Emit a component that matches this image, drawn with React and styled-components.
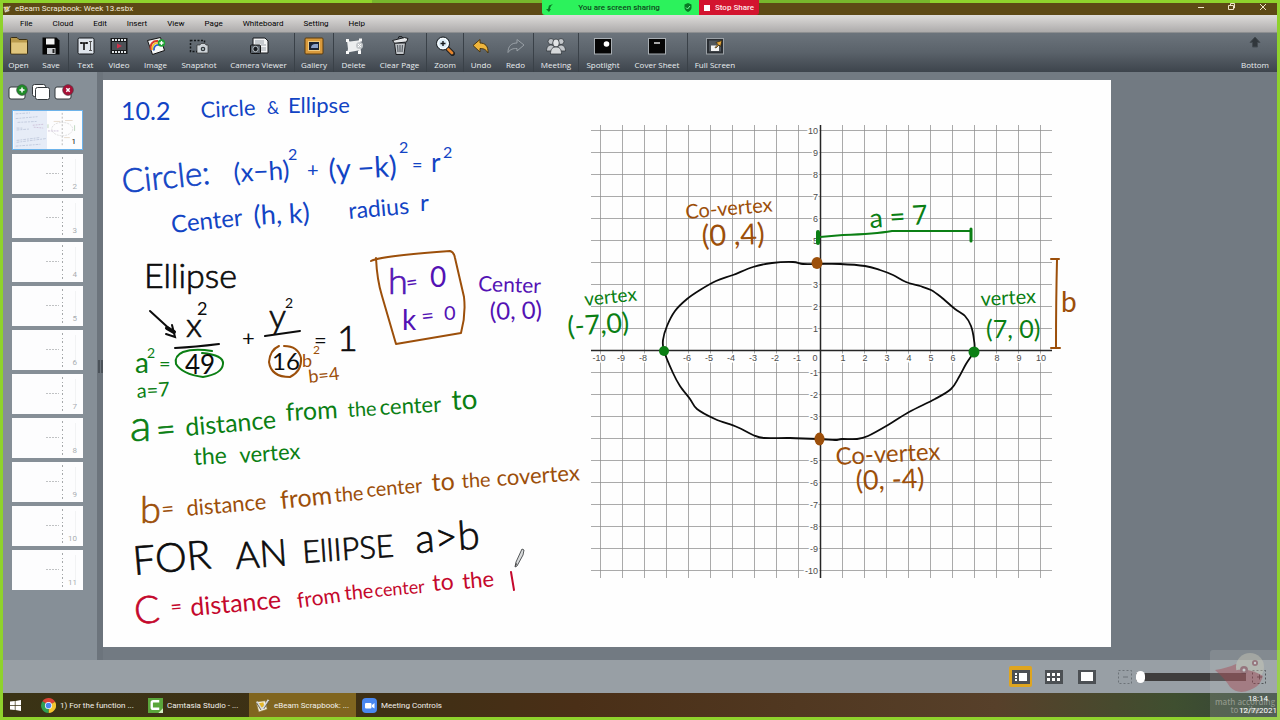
import React from "react";
import styled, { createGlobalStyle } from "styled-components";

const Global = createGlobalStyle`
  * { box-sizing: border-box; }
  body { margin: 0; background: #8fd22c; font-family: Roboto, "Noto Sans", sans-serif; font-size: 8px; }
  button { font: inherit; border: 0; background: none; padding: 0; margin: 0; }
`;

const Frame = styled.div`
  position: relative;
  min-height: 100vh;
  padding: 3px;
  display: flex;
  flex-direction: column;
  background: #8fd22c;
`;

const ShareOverlay = styled.div`
  position: absolute;
  top: 0;
  left: 0;
  right: 0;
  padding-left: 21px;
  display: flex;
  justify-content: center;
  z-index: 2;
`;
const ShareShade = styled.div`
  width: 558px;
  height: 3px;
  background: #77b52c;
  display: flex;
  justify-content: center;
`;
const SharePill = styled.div`
  display: flex;
  flex: none;
  height: 15px;
  width: 217px;
  border-radius: 0 0 3px 3px;
  overflow: hidden;
`;
const ShareStatus = styled.div`
  flex: 1;
  display: flex;
  align-items: center;
  justify-content: space-between;
  padding: 0 7px 0 4px;
  background: #2cf25c;
  color: #0c4a1c;
  font-weight: 500;
`;
const StopShare = styled.button`
  width: 60px;
  color: #ffe9ea;
  display: flex;
  align-items: center;
  justify-content: center;
  gap: 5px;
  && { font-weight: 500; background: #d3142f; }
`;

const TitleBar = styled.header`
  height: 12px;
  display: flex;
  align-items: center;
  gap: 4px;
  background: #5d4915;
  color: #f3ecdc;
`;
const Title = styled.span`
  flex: 1;
  line-height: 10px;
`;
const WindowControls = styled.div`
  display: flex;
  gap: 19px;
  padding-right: 8px;
  button { width: 12px; height: 12px; display: flex; color: #f0e4c8; }
`;

const MenuBar = styled.nav`
  height: 18px;
  display: flex;
  align-items: center;
  gap: 20px;
  padding-left: 17px;
  background: linear-gradient(#dedcda, #adabab);
  border-bottom: 1px solid #8d8f91;
  color: #1c1c1c;
`;

const Toolbar = styled.div`
  height: 39px;
  display: flex;
  justify-content: space-between;
  background: linear-gradient(#6c747c, #5a626a 50%, #3d444c);
  font-family: "Open Sans", "Noto Sans", sans-serif;
`;
const ToolRow = styled.div`
  display: flex;
`;
const Tool = styled.button`
  width: ${(p) => p.$w}px;
  height: 39px;
  display: flex;
  flex-direction: column;
  align-items: center;
  gap: 3px;
  color: #e9edf0;
  line-height: 12px;
  white-space: nowrap;
  && { padding-top: 3px; border-right: ${(p) => (p.$end ? "1px solid #3a4148" : "0")}; }
`;

const Main = styled.main`
  flex: 1;
  display: flex;
  align-items: stretch;
  background: #727a82;
`;
const Sidebar = styled.aside`
  width: 94px;
  flex: none;
  padding: 9px 14px 0 9px;
  background: #868f97;
`;
const PageActions = styled.div`
  display: flex;
  gap: 3px;
  margin-left: -4px;
  height: 29px;
  button { width: 20px; height: 20px; display: flex; }
`;
const Slides = styled.ol`
  list-style: none;
  margin: 0;
  padding: 0;
  display: flex;
  flex-direction: column;
  gap: 4px;
`;
const Slide = styled.button`
  position: relative;
  width: 71px;
  height: 40px;
  color: ${(p) => (p.$active ? "#111" : "#a9adb1")};
  && {
    display: flex;
    border: ${(p) => (p.$active ? "1px solid #6db3ea" : "0")};
    background: #fdfdfe;
  }
  svg { width: 100%; height: 100%; }
  span { position: absolute; right: 6px; bottom: 2px; line-height: 10px; }
`;
const Splitter = styled.div`
  width: 6px;
  flex: none;
  display: flex;
  align-items: center;
  gap: 1px;
  padding-left: 1px;
  background: #6c747c;
  i { width: 2px; height: 13px; background: #4b5259; }
`;
const Workspace = styled.section`
  flex: 1;
  padding: 8px 166px 13px 0;
`;
const Board = styled.svg`
  display: block;
  width: 100%;
  height: auto;
  background: #fefefe;
`;

const StatusBar = styled.footer`
  height: 33px;
  display: flex;
  align-items: center;
  justify-content: flex-end;
  padding-right: 11px;
  background: #989fa5;
`;
const ViewButtons = styled.div`
  display: flex;
  gap: 10px;
  padding-right: 20px;
`;
const ViewButton = styled.button`
  width: 23px;
  height: 21px;
  display: flex;
  align-items: center;
  justify-content: center;
  border-radius: 2px;
  && { background: ${(p) => (p.$active ? "#dfa51f" : "none")}; }
`;
const ZoomButton = styled.button`
  width: 14px;
  height: 14px;
  display: flex;
`;
const ZoomSlider = styled.input`
  appearance: none;
  width: 110px;
  height: 14px;
  margin: 0 6px 0 4px;
  background: none;
  &::-webkit-slider-runnable-track { height: 8px; background: #3f3d3d; }
  &::-webkit-slider-thumb {
    appearance: none;
    width: 9px;
    height: 12px;
    margin-top: -2px;
    border-radius: 5px;
    background: #fff;
  }
`;

const Taskbar = styled.div`
  height: 24px;
  display: flex;
  background: linear-gradient(90deg, #3a3315, #3e2f14 30%, #4a2f17 45%, #57402a 78%, #3f4f30 92%, #34443a);
  color: #f2f0ea;
`;
const Start = styled.button`
  width: 32px;
  display: flex;
  align-items: center;
  && { padding-left: 7px; }
`;
const Task = styled.button`
  width: 107px;
  display: flex;
  align-items: center;
  gap: 4px;
  color: inherit;
  && {
    padding-left: 6px;
    background: ${(p) => (p.$active ? "#80651f" : "none")};
  }
`;
const Clock = styled.div`
  position: relative;
  z-index: 2;
  margin-left: auto;
  width: 38px;
  text-align: center;
  line-height: 12px;
  color: #fff;
`;
const Watermark = styled.div`
  position: absolute;
  right: 0;
  bottom: 0;
  width: 70px;
  height: 70px;
  border-radius: 3px 0 0 0;
  background: rgba(190, 195, 195, 0.22);
  color: rgba(215, 215, 205, 0.45);
  text-align: center;
  font: 600 8px/8px "Open Sans", sans-serif;
  pointer-events: none;
  svg { display: block; margin: 0 0 4px 4px; }
`;

const K = "#16191c";
const toolIcons = {
  Open: (
    <g stroke="#3a2f14" strokeWidth="1">
      <path d="M1.500 2.500q0-1 1-1h5.500l2 2h7.500q1 0 1 1V17q0 1-1 1h-15q-1 0-1-1z" fill="#b99a4c" />
      <path d="M2.500 6.500h15.500v11H2.500z" fill="#e0c67e" stroke="none" />
    </g>
  ),
  Save: (
    <g>
      <path d="M1.500 1.500h14l3 3v14h-17z" fill="#050505" />
      <path d="M5 2.500h8.500v6H5z" fill="#f2f2f2" />
      <path d="M6 12h8.500v6H6z" fill="#c9cccf" />
      <path d="M11.500 13h2v4h-2z" fill="#222" />
    </g>
  ),
  Text: (
    <g>
      <rect x="2" y="2" width="16" height="16" rx="1.5" fill="#dfe5ec" stroke={K} />
      <path d="M5 7h6M8 7v7M5 6v2M11 6v2" stroke="#111" strokeWidth="1.600" />
      <path d="M13 5.500h3M13 14.500h3M14.500 5.500v9" stroke="#555" fill="none" />
    </g>
  ),
  Video: (
    <g>
      <rect x="1.500" y="2" width="17" height="16" fill="#17191b" />
      <path d="M3 4h14M3 16h14" stroke="#dfe3e6" strokeWidth="2" strokeDasharray="2 1" />
      <rect x="3" y="6" width="14" height="8" fill="#4d5257" />
      <path d="M8 7.500l5 2.500-5 2.500z" fill="#d3304a" />
    </g>
  ),
  Image: (
    <g>
      <path d="M1.500 4.500l13-3 4 13-12 4z" fill="#f7f7f7" stroke="#111" />
      <path d="M5 14C3.500 8 7 4.500 12 5" fill="none" stroke="#d83a2e" strokeWidth="2" />
      <path d="M6.500 14C5.500 9.500 8.500 6.500 12.500 7" fill="none" stroke="#f2c32c" strokeWidth="1.800" />
      <path d="M8 14.500C7.500 11 9.500 8.500 13 9" fill="none" stroke="#2e62c8" strokeWidth="1.800" />
      <circle cx="15.500" cy="7" r="3.700" fill="#20a236" />
      <path d="M13.500 7h4M15.500 5v4" stroke="#fff" strokeWidth="1.300" />
    </g>
  ),
  Snapshot: (
    <g>
      <rect x="1.500" y="4.500" width="14" height="11" fill="none" stroke="#15181b" strokeDasharray="2 1.500" strokeWidth="1.500" />
      <path d="M8 9h3l1-1.500h4l1 1.500h2v8H8z" fill="#cdd3d8" stroke="#333" strokeWidth=".7" />
      <circle cx="14" cy="13" r="2.300" fill="#33383d" />
      <circle cx="14" cy="13" r="1" fill="#bcc" />
    </g>
  ),
  "Camera Viewer": (
    <g>
      <path d="M4 2h12l3 3v12H4z" fill="#f4f5f6" stroke={K} />
      <path d="M6 5h9M6 7h9M12 9h5M12 12h5M12 14h5" stroke="#9aa1a8" />
      <rect x="1.500" y="9" width="10" height="8.500" rx="1" fill="#596068" stroke="#111" />
      <circle cx="6.500" cy="13" r="2.700" fill="#1a1d20" stroke="#b9c0c6" />
    </g>
  ),
  Gallery: (
    <g>
      <rect x="1" y="2" width="18" height="16" rx="1" fill="#d99a3c" stroke="#5b3a0d" />
      <rect x="4.500" y="5.500" width="11" height="9" fill="#1a2335" stroke="#f0cc82" />
      <path d="M7 12c0-3 2-4 4-4h3v4z" fill="#8aa0c8" />
    </g>
  ),
  Delete: (
    <g>
      <path d="M3 4.500l3 1 8-1 3-1-1 4 1 8-3-1-8 1.500-3 1 1-4z" fill="#eceeef" />
      <path d="M2 3h3v3H2zM15 2.500h3v3h-3zM2 15h3v3H2zM14 15h3v3h-3z" fill="#fafafa" />
      <circle cx="15.500" cy="9.500" r="3.500" fill="#c4c8cb" />
      <path d="M14 8l3 3M17 8l-3 3" stroke="#fff" />
    </g>
  ),
  "Clear Page": (
    <g>
      <path d="M4.500 7h11l-1.500 11.500H6z" fill="#c2c6ca" stroke="#1b1d20" />
      <path d="M7.500 9l.5 7M10 9v7M12.500 9l-.5 7" stroke="#5c6268" strokeWidth="1.300" />
      <path d="M2.500 4.500l12-3 3.500 1-1.500 3.500-12 1.200z" fill="#e4e6e8" stroke="#1b1d20" />
      <path d="M8 2.500l1-2 3 .2 1 1.500" fill="none" stroke="#1b1d20" />
    </g>
  ),
  Zoom: (
    <g>
      <path d="M12.500 12.500l5 5" stroke="#222" strokeWidth="5" strokeLinecap="round" />
      <path d="M13 13l4 4" stroke="#e5852d" strokeWidth="2.800" strokeLinecap="round" />
      <circle cx="8" cy="7.500" r="6.500" fill="#dcecf6" stroke="#15181b" />
      <circle cx="8" cy="7.500" r="5" fill="none" stroke="#fff" />
      <path d="M5.500 7.500h5M8 5v5" stroke="#15181b" strokeWidth="1.400" />
    </g>
  ),
  Undo: <path d="M2 9.500L9 3.500v3.500c5 0 8.500 3 8 10-2-3.500-4-4.500-8-4.500V16z" fill="#efb53c" stroke="#4a3610" strokeLinejoin="round" />,
  Redo: <path d="M18 9L11 3.500V7C5.500 7 2 10 2 16.500c2.500-3.500 5-4 9-4V15z" fill="#5f676f" stroke="#9aa1a7" strokeLinejoin="round" />,
  Meeting: (
    <g fill="#c3c7cb" stroke="#34393e" strokeWidth=".8">
      <circle cx="5" cy="5.500" r="3" />
      <circle cx="15" cy="5.500" r="3" />
      <path d="M.5 15c0-4 2-6 4.500-6s4 2 4 6zM19.500 15c0-4-2-6-4.500-6s-4 2-4 6z" />
      <ellipse cx="10" cy="7" rx="3.300" ry="4" fill="#e3e5e7" />
      <path d="M4.500 18c0-5 2-7 5.500-7s5.500 2 5.500 7z" fill="#d6d9db" />
    </g>
  ),
  Spotlight: (
    <g>
      <rect x="1.500" y="2.500" width="17" height="15.500" fill="#050505" stroke="#a9afb4" />
      <circle cx="13.500" cy="8" r="2.800" fill="#fff" />
    </g>
  ),
  "Cover Sheet": (
    <g>
      <rect x="1.500" y="2.500" width="17" height="15.500" fill="#050505" stroke="#a9afb4" />
      <path d="M7 7h6" stroke="#eee" strokeWidth="1.400" />
    </g>
  ),
  "Full Screen": (
    <g>
      <rect x="1.500" y="2.500" width="17" height="15.500" fill="#2a2e33" stroke="#9ba1a6" />
      <path d="M4 4.500h12v11H4z" fill="#50565c" />
      <path d="M6 9.500h8v5.500H6z" fill="#f4f4f4" />
      <path d="M10 11.500l3-3-2-2 6-2-1.500 6-1.500-1.500-3 3z" fill="#e5a83c" stroke="#2b2008" strokeWidth=".7" />
    </g>
  ),
  Bottom: <path d="M10 1l5 5.500h-2.500V11h-5V6.500H5z" fill="#31373c" stroke="#434a50" />,
};

const tools = [
  ["Open", 31], ["Save", 35, 1], ["Text", 33], ["Video", 34], ["Image", 39], ["Snapshot", 48],
  ["Camera Viewer", 72, 1], ["Gallery", 39, 1], ["Delete", 39], ["Clear Page", 54, 1],
  ["Zoom", 37, 1], ["Undo", 34], ["Redo", 36, 1], ["Meeting", 45, 1], ["Spotlight", 48],
  ["Cover Sheet", 61, 1], ["Full Screen", 54],
];

function ToolButton({ name, width, end }) {
  return (
    <Tool $w={width} $end={end} type="button">
      <svg width="20" height="20" viewBox="0 0 20 20" fill="none" aria-hidden="true">{toolIcons[name]}</svg>
      {name}
    </Tool>
  );
}

const Ink = styled.text`
  font-family: Lato, "Open Sans", sans-serif;
  font-weight: ${(p) => (p.$size > 29 ? 300 : 400)};
  font-size: ${(p) => p.$size}px;
  fill: ${(p) => p.$color};
  stroke: ${(p) => p.$color};
  stroke-width: ${(p) => (p.$size > 29 ? 0.7 : 0)};
  stroke-linejoin: round;
`;
const AxisLabel = styled.text`
  font: 9px "Liberation Sans", sans-serif;
  fill: #4c4c4c;
  stroke: #fefefe;
  stroke-width: 3px;
  paint-order: stroke;
`;

const blue = "#1244c4";
const green = "#0b7f14";
const brown = "#9c4f0a";
const purple = "#5312b4";
const black = "#0c0c0c";
const red = "#c4082c";

/* text, x, baseline, size, colour, tilt */
const notes = [
  ["10.2", 121, 120, 25, blue, 0],
  ["Circle", 201, 118, 22, blue, -3],
  ["&", 267, 114, 17, blue, 0],
  ["Ellipse", 288, 113, 22, blue, 0],
  ["Circle:", 123, 193, 33, blue, -6],
  ["(x−h)", 234, 182, 26, blue, -3],
  ["2", 288, 160, 16, blue, 0],
  ["+", 307, 177, 20, blue, 0],
  ["(y −k)", 329, 180, 29, blue, -3],
  ["2", 399, 153, 16, blue, 0],
  ["=", 412, 171, 18, blue, 0],
  ["r", 431, 172, 26, blue, 0],
  ["2", 443, 158, 16, blue, 0],
  ["Center", 172, 233, 24, blue, -6],
  ["(h, k)", 254, 225, 27, blue, -3],
  ["radius", 349, 219, 23, blue, -5],
  ["r", 420, 211, 24, blue, 0],
  ["Ellipse", 144, 288, 34, black, 0],
  ["x", 186, 337, 34, black, 0],
  ["2", 197, 315, 18, black, 0],
  ["49", 185, 374, 26, black, 0],
  ["+", 242, 346, 22, black, 0],
  ["y", 269, 328, 34, black, 0],
  ["2", 285, 308, 14, black, 0],
  ["16", 272, 370, 24, black, 0],
  ["=", 314, 348, 22, black, 0],
  ["1", 337, 351, 36, black, 0],
  ["a", 135, 373, 28, green, 0],
  ["2", 147, 358, 14, green, 0],
  ["=", 159, 371, 20, green, 0],
  ["a=7", 137, 398, 20, green, -3],
  ["b", 302, 367, 18, brown, 0],
  ["2", 313, 354, 12, brown, 0],
  ["b=4", 309, 383, 18, brown, -6],
  ["a", 130, 441, 44, green, 0],
  ["=", 157, 442, 34, green, -5],
  ["distance", 186, 436, 25, green, -5],
  ["from", 286, 421, 25, green, -3],
  ["the", 348, 417, 20, green, -3],
  ["center", 380, 415, 22, green, -3],
  ["to", 452, 410, 28, green, -3],
  ["the", 194, 465, 23, green, -3],
  ["vertex", 240, 463, 22, green, -4],
  ["b", 140, 523, 38, brown, 0],
  ["=", 162, 517, 22, brown, -5],
  ["distance", 187, 516, 22, brown, -5],
  ["from", 281, 509, 25, brown, -6],
  ["the", 335, 502, 20, brown, -4],
  ["center", 367, 497, 20, brown, -5],
  ["to", 432, 491, 25, brown, -3],
  ["the", 462, 488, 20, brown, -3],
  ["covertex", 497, 486, 22, brown, -4],
  ["FOR", 134, 575, 40, black, -5],
  ["AN", 236, 569, 37, black, -4],
  ["EllIPSE", 303, 563, 31, black, -4],
  ["a>b", 416, 553, 40, black, -4],
  ["C", 135, 624, 38, red, -4],
  ["=", 171, 614, 20, red, -5],
  ["distance", 191, 616, 25, red, -5],
  ["from", 298, 608, 21, red, -8],
  ["the", 345, 600, 20, red, -5],
  ["center", 375, 597, 18, red, -5],
  ["to", 433, 591, 23, red, -5],
  ["the", 463, 589, 22, red, -5],
  ["h", 388, 294, 36, purple, 0],
  ["=", 407, 290, 20, purple, -8],
  ["0", 430, 287, 28, purple, 0],
  ["k", 402, 330, 28, purple, 0],
  ["=", 422, 324, 22, purple, -6],
  ["0", 444, 320, 20, purple, 0],
  ["Center", 478, 291, 21, purple, 2],
  ["(0, 0)", 490, 320, 24, purple, -2],
  ["Co-vertex", 686, 219, 20, brown, -5],
  ["(0 ,4)", 702, 246, 29, brown, -2],
  ["a = 7", 870, 228, 27, green, -4],
  ["vertex", 585, 306, 19, green, -6],
  ["(-7,0)", 568, 336, 27, green, -4],
  ["vertex", 981, 306, 20, green, -3],
  ["(7, 0)", 986, 338, 25, green, 0],
  ["b", 1061, 312, 28, brown, 0],
  ["Co-vertex", 836, 465, 24, brown, -3],
  ["(0, -4)", 856, 490, 27, brown, -2],
];

/* the freehand ellipse, as sampled pen positions */
const curve = [
  [664, 351], [663, 340], [667, 326], [675, 311], [687, 299], [700, 290], [716, 281], [733, 275],
  [753, 267], [772, 263], [793, 262], [803, 264], [818, 264], [840, 264], [865, 266], [880, 270],
  [893, 275], [906, 282], [920, 286], [931, 290], [941, 297], [955, 309], [965, 316], [971, 326],
  [974, 340], [974, 351], [966, 364], [959, 377], [951, 389], [935, 399], [909, 412], [888, 425],
  [868, 436], [857, 439], [842, 439], [835, 440], [819, 439], [790, 438], [764, 438], [753, 435],
  [737, 427], [715, 419], [697, 409], [690, 399], [680, 386], [673, 373],
];
const smooth = (pts) => {
  const n = pts.length;
  const at = (i) => pts[(i + n) % n];
  return pts.reduce((d, p, i) => {
    const a = at(i - 1), q = at(i + 1), b = at(i + 2);
    return `${d}C${p[0] + (q[0] - a[0]) / 6} ${p[1] + (q[1] - a[1]) / 6} ${q[0] - (b[0] - p[0]) / 6} ${q[1] - (b[1] - p[1]) / 6} ${q[0]} ${q[1]}`;
  }, `M${pts[0]}`);
};

const steps = Array.from({ length: 21 }, (_, i) => i - 10);

function Whiteboard() {
  return (
    <Board viewBox="103 80 1008 567" role="img" aria-label="Whiteboard page 1">
      <g stroke="#8e8e8e" strokeWidth="1" strokeOpacity=".75">
        {steps.map((n) => (
          <React.Fragment key={n}>
            <path d={`M${820.5 + n * 22} 125V578`} />
            <path d={`M591 ${350.5 + n * 22}H1052`} />
          </React.Fragment>
        ))}
      </g>
      <path d="M820.5 125V578M591 350.500H1052" stroke="#262626" strokeWidth="1.500" />
      {steps.map((n) => (
        <React.Fragment key={n}>
          {n !== -7 && n !== 7 && (
            <AxisLabel x={n === 0 ? 815 : 820 + n * 22 + (n > 0 ? 1 : -1)} y="361" textAnchor="middle">{n}</AxisLabel>
          )}
          {n !== 0 && Math.abs(n) !== 4 && (
            <AxisLabel x="818" y={353.5 - n * 22} textAnchor="end">{n}</AxisLabel>
          )}
        </React.Fragment>
      ))}
      <path d={smooth(curve)} fill="none" stroke={black} strokeWidth="1.800" strokeLinejoin="round" />
      <g fill="none" stroke={brown} strokeWidth="2" strokeLinecap="round" strokeLinejoin="round">
        <path d="M371 261Q380 256 450 251Q454 252 455 258L464 297Q466 315 461 333L396 344L382 296Q377 280 376 258" />
        <path d="M279 346Q270 350 269 362Q271 377 290 377Q302 371 301 358Q298 346 284 346" />
        <path d="M1057 260Q1056 300 1056 347M1051 259H1059M1051 348H1060" />
      </g>
      <g fill="none" stroke={green} strokeWidth="2" strokeLinecap="round" strokeLinejoin="round">
        <path d="M212 351Q194 348 183 352Q174 356 176 364Q182 374 203 377Q222 374 223 364Q224 355 202 353" />
        <path d="M820 237L843 235Q875 234 892 231H971" />
        <path d="M971 229V241" strokeWidth="3" />
        <path d="M818 232V243" strokeWidth="4" />
      </g>
      <g fill="none" stroke={black} strokeWidth="2" strokeLinecap="round">
        <path d="M175 348Q195 347 219 344M265 336L300 331" />
        <path d="M150 311L174 333M166 334L175 337L172 325" />
        <path d="M167 328L174 332" strokeWidth="4" />
      </g>
      {notes.map(([text, x, y, size, color, tilt], i) => (
        <Ink key={i} x={x} y={y} $size={size} $color={color} transform={tilt ? `rotate(${tilt} ${x} ${y})` : undefined}>
          {text}
        </Ink>
      ))}
      <path d="M511 572L514 590" stroke={red} strokeWidth="2" strokeLinecap="round" />
      <path d="M522 549l2 1-1 5-6 11-2 1 1-5z" fill="#d8dadb" stroke="#55585a" />
      <path d="M515 567l1-4 1 1z" fill="#333" />
      <circle cx="664" cy="351" r="5" fill={green} />
      <circle cx="974" cy="352" r="5.500" fill={green} />
      <ellipse cx="817" cy="263" rx="5.500" ry="6" fill={brown} />
      <ellipse cx="819.500" cy="439" rx="5" ry="6.500" fill={brown} />
    </Board>
  );
}

function SlideArt({ active }) {
  return (
    <svg viewBox="0 0 71 40" aria-hidden="true">
      {active ? (
        <g fill="none" opacity=".75">
          <rect width="35" height="40" fill="#dfe7f5" />
          <g stroke="#9aa8c5" strokeWidth=".7" strokeDasharray="3 1 2 1">
            <path d="M2 3l15-1M2 8l23-2M4 12l20-1" />
            <path d="M3 18h6M3 20l13-1M3 31l24-3M3 33l31-4M2 37l26-2" />
          </g>
          <path d="M20 15l11-1M21 17l10 1M36 21h12" stroke="#c0b0cf" strokeDasharray="2 1" />
          <path d="M51 2v36" stroke="#777" strokeDasharray="2 2" strokeWidth=".7" />
          <ellipse cx="51" cy="19" rx="11" ry="7" stroke="#aaa" strokeDasharray="2 1" strokeWidth=".5" />
          <path d="M42 11h7M54 10h8M53 28h6" stroke="#d8c3ad" strokeWidth=".8" />
          <path d="M64 15v6M36 14v4" stroke="#a9c9ab" />
        </g>
      ) : (
        <g fill="none" stroke="#a5a8aa" strokeWidth="1">
          <path d="M50.500 3v34" strokeDasharray="2 3 1 2" />
          <path d="M34 19.500h13" strokeDasharray="2 1" strokeWidth=".7" />
          <path d="M63.500 5v25" stroke="#f2f3f4" />
        </g>
      )}
    </svg>
  );
}

function PageIcon({ kind }) {
  return (
    <svg width="20" height="20" viewBox="0 0 20 20" aria-hidden="true">
      {kind === "copy" && <rect x="1.500" y="3.500" width="13" height="12" rx="2" fill="#fff" stroke="#33383c" />}
      {kind === "copy"
        ? <rect x="4.500" y="6.500" width="14" height="12" rx="2" fill="#fff" stroke="#33383c" />
        : <rect x="1" y="6" width="16" height="12" rx="2" fill="#fff" stroke="#33383c" />}
      {kind !== "copy" && <circle cx="14" cy="9" r="5.400" fill={kind === "add" ? "#1f8c28" : "#a80f35"} stroke="#40454a" strokeWidth=".6" />}
      {kind === "add" && <path d="M11.500 9h5M14 6.500v5" stroke="#fff" strokeWidth="1.500" />}
      {kind === "remove" && <path d="M12.300 7.300l3.400 3.400M15.700 7.300l-3.400 3.400" stroke="#fff" strokeWidth="1.500" />}
    </svg>
  );
}

const EBeamIcon = ({ size }) => (
  <svg width={size} height={size} viewBox="0 0 16 16" aria-hidden="true">
    <path d="M1 4l10-1 2 9-9 3z" fill="#f5f1df" stroke="#8a7434" strokeWidth=".7" />
    <path d="M4 5.500l5-1 1 5-4 1z" fill="#e3b72b" />
    <path d="M2 4l5 8M8 12l6.500-10" fill="none" stroke="#d6d8d9" strokeWidth="2.200" />
    <path d="M1.500 5l5 8M9.500 11.500L15 3" fill="none" stroke="#48442f" strokeWidth=".8" />
  </svg>
);

export default function App() {
  return (
    <Frame>
      <Global />
      <ShareOverlay>
        <ShareShade>
          <SharePill>
            <ShareStatus>
              <svg width="8" height="9" viewBox="0 0 8 9" aria-hidden="true"><path d="M7 1L3 2.500 2 6H0l3 3 2-3H4c0-2 1-3 3-5z" fill="#087a24" /></svg>
              You are screen sharing
              <svg width="8" height="9" viewBox="0 0 8 9" aria-hidden="true"><path d="M4 0l3.500 1.500v3C7.500 7 6 8 4 9 2 8 .5 7 .5 4.500v-3z" fill="#087a24" /><path d="M2 4.500L3.500 6 6 3" fill="none" stroke="#7dffa0" /></svg>
            </ShareStatus>
            <StopShare type="button">
              <svg width="6" height="6" aria-hidden="true"><rect width="6" height="6" fill="#fff" /></svg>
              Stop Share
            </StopShare>
          </SharePill>
        </ShareShade>
      </ShareOverlay>

      <TitleBar>
        <EBeamIcon size={8} />
        <Title>eBeam Scrapbook: Week 13.esbx</Title>
        <WindowControls>
          <button type="button" aria-label="Minimize"><svg width="12" height="12"><path d="M3 4.500h6" stroke="currentColor" /></svg></button>
          <button type="button" aria-label="Restore"><svg width="12" height="12" fill="none" stroke="currentColor"><path d="M2.500 2.500h5v4h-5zM4.500 2.500v-2h4v4.500h-1" /></svg></button>
          <button type="button" aria-label="Close"><svg width="12" height="12"><path d="M3 1l6 6M9 1l-6 6" stroke="currentColor" /></svg></button>
        </WindowControls>
      </TitleBar>

      <MenuBar>
        {["File", "Cloud", "Edit", "Insert", "View", "Page", "Whiteboard", "Setting", "Help"].map((m) => (
          <button key={m} type="button">{m}</button>
        ))}
      </MenuBar>

      <Toolbar>
        <ToolRow>
          {tools.map(([name, width, end]) => (
            <ToolButton key={name} name={name} width={width} end={end} />
          ))}
        </ToolRow>
        <ToolButton name="Bottom" width={44} />
      </Toolbar>

      <Main>
        <Sidebar>
          <PageActions>
            <button type="button" aria-label="Add page"><PageIcon kind="add" /></button>
            <button type="button" aria-label="Duplicate page"><PageIcon kind="copy" /></button>
            <button type="button" aria-label="Delete page"><PageIcon kind="remove" /></button>
          </PageActions>
          <Slides>
            {Array.from({ length: 11 }, (_, i) => (
              <li key={i}>
                <Slide type="button" $active={i === 0}>
                  <SlideArt active={i === 0} />
                  <span>{i + 1}</span>
                </Slide>
              </li>
            ))}
          </Slides>
        </Sidebar>
        <Splitter><i /><i /></Splitter>
        <Workspace><Whiteboard /></Workspace>
      </Main>

      <StatusBar>
        <ViewButtons>
          <ViewButton type="button" $active aria-label="Slides and page">
            <svg width="18" height="14"><rect width="18" height="14" fill="#4c5054" /><path d="M3 3h2v2H3zM3 6h2v2H3zM3 9h2v2H3zM7 3h8v8H7z" fill="#fff" /></svg>
          </ViewButton>
          <ViewButton type="button" aria-label="All slides">
            <svg width="18" height="14"><rect width="18" height="14" fill="#4c5054" /><path d="M2 3h3v3H2zM7 3h3v3H7zM12 3h3v3h-3zM2 8h3v3H2zM7 8h3v3H7zM12 8h3v3h-3z" fill="#fff" /></svg>
          </ViewButton>
          <ViewButton type="button" aria-label="Page only">
            <svg width="18" height="14"><rect width="18" height="14" fill="#4c5054" /><path d="M3 2h12v9H3z" fill="#fff" /></svg>
          </ViewButton>
        </ViewButtons>
        <ZoomButton type="button" aria-label="Zoom out">
          <svg width="14" height="14" fill="none" stroke="#6d7378"><rect x=".5" y=".5" width="13" height="13" strokeDasharray="2 2" /><path d="M5 7h5" /></svg>
        </ZoomButton>
        <ZoomSlider type="range" min="0" max="100" defaultValue="0" aria-label="Zoom" />
        <ZoomButton type="button" aria-label="Zoom in">
          <svg width="14" height="14" fill="none" stroke="#33373a"><rect x=".5" y=".5" width="13" height="13" strokeDasharray="2 2" /><path d="M5 7h5M7.500 4.500v5" /></svg>
        </ZoomButton>
      </StatusBar>

      <Taskbar>
        <Start type="button" aria-label="Start">
          <svg width="11" height="11" viewBox="0 0 11 11"><path d="M0 1.500L4.800 1v4.200H0zM5.500.900L11 0v5.200H5.500zM0 5.900h4.800V10L0 9.500zM5.500 5.900H11V11l-5.500-.9z" fill="#fff" /></svg>
        </Start>
        <Task type="button">
          <svg width="15" height="15" viewBox="0 0 16 16" aria-hidden="true">
            <path d="M8 8L1.500 3.500A8 8 0 0 1 15 4z" fill="#dc4437" />
            <path d="M8 8L15 4A8 8 0 0 1 8 16z" fill="#f5c52f" />
            <path d="M8 8v8A8 8 0 0 1 1.500 3.500z" fill="#2f9e51" />
            <circle cx="8" cy="8" r="3.800" fill="#fff" /><circle cx="8" cy="8" r="3" fill="#4a84ee" />
          </svg>
          1) For the function ...
        </Task>
        <Task type="button">
          <svg width="15" height="15" viewBox="0 0 16 16" aria-hidden="true"><rect width="16" height="16" fill="#5aa63b" /><path d="M12 3.500H5.500q-1.500 0-1.500 1.500v5q0 1.500 1.500 1.500H12" fill="none" stroke="#fff" strokeWidth="2.500" /><path d="M11 16h5v-5z" fill="#d5efc4" /></svg>
          Camtasia Studio - ...
        </Task>
        <Task type="button" $active>
          <EBeamIcon size={15} />
          eBeam Scrapbook: ...
        </Task>
        <Task type="button">
          <svg width="15" height="15" viewBox="0 0 15 15" aria-hidden="true"><rect width="15" height="15" rx="4" fill="#4a87f0" /><rect x="3" y="5" width="6.500" height="5.500" rx="1" fill="#fff" /><path d="M10 7l2.500-2v5.500L10 9z" fill="#fff" /></svg>
          Meeting Controls
        </Task>
        <Clock>18:14<br />12/7/2021</Clock>
      </Taskbar>

      <Watermark>
        <svg width="62" height="44" viewBox="0 0 62 44" aria-hidden="true">
          <g opacity=".42">
            <path d="M1 20q12-2 21-6l22 8q2 13-8 18-12 5-20-3-4-7-15-17z" fill="#a8434e" />
            <circle cx="36" cy="17" r="14" fill="#cfcdbb" />
            <path d="M12 24q18-10 37 2-4 14-18 14-14 0-19-16z" fill="#a8434e" />
            <circle cx="30" cy="20" r="4" fill="#8a3540" /><circle cx="41" cy="13" r="3" fill="#8a3540" />
            <circle cx="30" cy="20" r="1.500" fill="#fff" /><circle cx="41" cy="13" r="1.200" fill="#fff" />
          </g>
        </svg>
        math according<br />to mike
      </Watermark>
    </Frame>
  );
}
